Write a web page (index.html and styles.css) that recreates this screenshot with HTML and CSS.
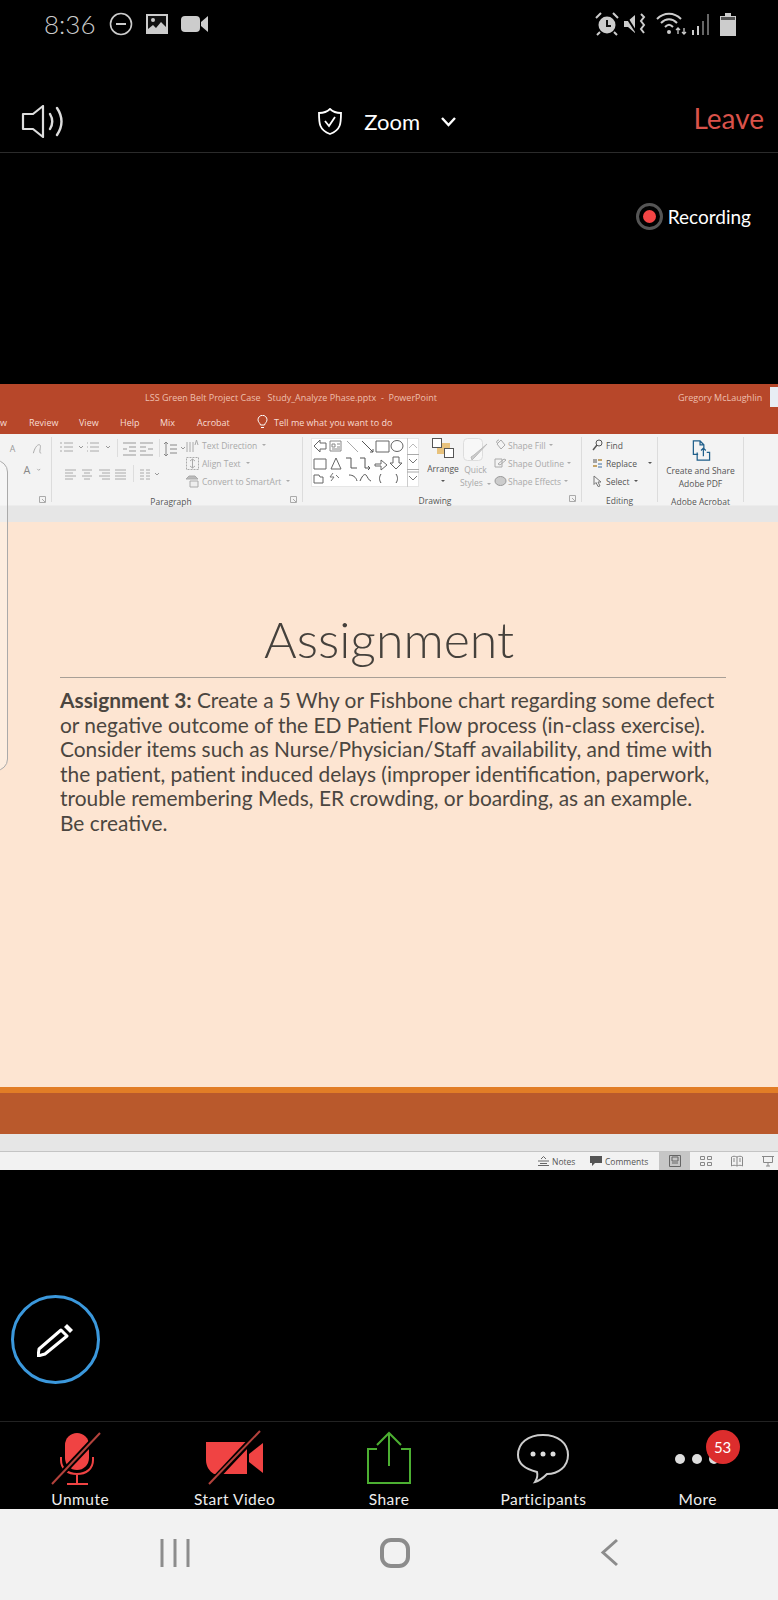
FILE: index.html
```html
<!DOCTYPE html>
<html lang="en">
<head>
    <meta charset="UTF-8">
    <meta name="viewport" content="width=device-width, initial-scale=1.0">
    <title>Zoom Meeting</title>
    <link rel="stylesheet" href="styles.css">
</head>
<body>
    <div class="status-bar">
        <div class="status-left">
            <span class="clock">8:36</span>
            <svg class="ic" width="24" height="24" viewBox="0 0 24 24"><circle cx="12" cy="12" r="10.5" fill="none" stroke="#ccc" stroke-width="1.6"/><path d="M7 12h10" stroke="#ccc" stroke-width="2"/></svg>
            <svg class="ic" width="24" height="22" viewBox="0 0 24 22"><path d="M1 1h22v20H1z" fill="#ccc"/><path d="M3 3h18v11l-5-5-5 6-3-3-5 4z" fill="#111"/><circle cx="8" cy="7" r="2" fill="#ccc"/></svg>
            <svg class="ic" width="27" height="16" viewBox="0 0 27 16"><rect x="0" y="0" width="19" height="16" rx="4" fill="#ccc"/><path d="M20 6l7-6v16l-7-6z" fill="#ccc"/></svg>
        </div>
        <div class="status-right">
            <svg width="24" height="24" viewBox="0 0 24 24"><circle cx="12" cy="13" r="8.5" fill="#ccc"/><path d="M12 8v6h4" stroke="#111" stroke-width="2" fill="none"/><path d="M1 6l5-5M23 6l-5-5M5 20l-3 3M19 20l3 3" stroke="#ccc" stroke-width="2"/></svg>
            <svg width="24" height="24" viewBox="0 0 24 24"><path d="M1 9h4l7-6v18l-7-6H1z" fill="#ccc"/><path d="M1 1l14 22" stroke="#000" stroke-width="2"/><path d="M18 2l3 3-3 4 3 4-3 4 3 4" stroke="#ccc" stroke-width="2" fill="none"/></svg>
            <svg class="wifi" width="31" height="24" viewBox="0 0 31 24"><path d="M1 7c7-7 17-7 24 0M5 11c5-5 11-5 16 0M9 15c3-3 5-3 8 0" stroke="#ccc" stroke-width="2" fill="none"/><circle cx="13" cy="20" r="2" fill="#ccc"/><path d="M22 22v-6M20 18l2-2 2 2M28 16v6M26 20l2 2 2-2" stroke="#ccc" stroke-width="1.3" fill="none"/></svg>
            <svg width="20" height="21" viewBox="0 0 20 21"><path d="M1 21v-5h2v5zM6 21v-9h2v9z" fill="#ccc"/><path d="M11 21V7h2v14zM16 21V0h2v21z" fill="#666"/></svg>
            <svg class="battery" width="16" height="23" viewBox="0 0 16 23"><path d="M5 0h6v3h5v20H0V3h5z" fill="#ccc"/><path d="M1 4h14v3H1z" fill="#555"/></svg>
        </div>
    </div>

    <div class="top-bar">
        <svg class="speaker" width="45" height="33" viewBox="0 0 45 33"><path d="M2 9h10L22 1v31l-10-8H2z" fill="none" stroke="#ddd" stroke-width="2.2" stroke-linejoin="round"/><path d="M29 9c3 5 3 10 0 15M36 3c6 9 6 18 0 27" fill="none" stroke="#ddd" stroke-width="2.4" stroke-linecap="round"/></svg>
        <div class="meeting-name">
            <svg width="24" height="27" viewBox="0 0 24 27"><path d="M12 1c3 3 6 4 11 4 0 10 0 17-11 21C1 22 1 15 1 5c5 0 8-1 11-4z" fill="none" stroke="#fff" stroke-width="1.8"/><path d="M7 13l4 5 6-9" fill="none" stroke="#fff" stroke-width="1.8"/></svg>
            <span>Zoom</span>
            <svg width="17" height="11" viewBox="0 0 17 11"><path d="M2 2l6.5 7L15 2" fill="none" stroke="#fff" stroke-width="2.4"/></svg>
        </div>
        <span class="leave">Leave</span>
    </div>

    <div class="recording">
        <div class="rec-dot"></div>
        <span>Recording</span>
    </div>

    <div class="ppt">
        <div class="ppt-title">
            <span class="doc-name">LSS Green Belt Project Case &nbsp; Study_Analyze Phase.pptx &nbsp;-&nbsp; PowerPoint</span>
            <span class="user-name">Gregory McLaughlin</span>
            <div class="avatar"></div>
        </div>
        <div class="ppt-tabs">
            <span class="tab-w">w</span>
            <span class="tab-review">Review</span>
            <span class="tab-view">View</span>
            <span class="tab-help">Help</span>
            <span class="tab-mix">Mix</span>
            <span class="tab-acrobat">Acrobat</span>
            <svg class="bulb" width="11" height="14" viewBox="0 0 11 14"><path d="M3.5 10C3 8 1 7 1 4.800a4.500 4.500 0 0 1 9 0C10 7 8 8 7.500 10zM4 12.500h3" fill="none" stroke="#fff" stroke-width="1"/></svg>
            <span>Tell me what you want to do</span>
        </div>
        <div class="ribbon">
            <div class="group group-font">
                <div class="group-body">
                    <svg width="52" height="52" viewBox="0 0 52 52" fill="none" stroke="#bbb">
                        <text x="10" y="14" font-size="9" fill="#999" stroke="none" font-family="Open Sans">A</text>
                        <path d="M34 15c2-8 6-10 7-8s-2 8 1 8" stroke="#aaa"/>
                        <text x="24" y="36" font-size="11" fill="#888" stroke="none" font-family="Open Sans">A</text>
                        <path d="M38 31l1.500 1.500L41 31" stroke="#aaa"/>
                    </svg>
                </div>
                <div class="group-foot"><svg class="launcher" width="7" height="7" viewBox="0 0 7 7"><path d="M.5.500h6v6h-6zM3 3l3 3" fill="none" stroke="#aaa"/></svg></div>
            </div>
            <div class="group group-para">
                <div class="group-body">
                    <svg class="para-icons" width="132" height="52" viewBox="0 0 132 52" fill="none" stroke="#aaa">
                        <path d="M10 5h9M10 9h9M10 13h9M6 5h2M6 9h2M6 13h2"/>
                        <path d="M25 8l2 2 2-2" stroke="#999"/>
                        <path d="M36 5h9M36 9h9M36 13h9M33 5h1M33 9h1M33 13h1"/>
                        <path d="M52 8l2 2 2-2" stroke="#999"/>
                        <path d="M63.500 1v18" stroke="#ddd"/>
                        <path d="M69 5h13M75 9h7M75 13h7M69 17h13M73 11h-4" stroke="#999"/>
                        <path d="M86 5h13M86 9h6M86 13h6M86 17h13M94 11h5" stroke="#999"/>
                        <path d="M105.500 1v18" stroke="#ddd"/>
                        <path d="M112 4v14M110 6l2-2 2 2M110 16l2 2 2-2M116 7h7M116 11h7M116 15h7" stroke="#888"/>
                        <path d="M127 9l2 2 2-2" stroke="#999"/>
                        <path d="M11 32h11M11 35h8M11 38h11M11 41h8"/>
                        <path d="M28 32h10M30 35h6M28 38h10M30 41h6"/>
                        <path d="M45 32h11M48 35h8M45 38h11M48 41h8"/>
                        <path d="M61 32h11M61 35h11M61 38h11M61 41h11"/>
                        <path d="M79.500 27v17" stroke="#ddd"/>
                        <path d="M86 32h4M86 35h4M86 38h4M86 41h4M92 32h4M92 35h4M92 38h4M92 41h4"/>
                        <path d="M101 35l2 2 2-2" stroke="#999"/>
                    </svg>
                    <div class="cmd-list">
                        <div class="cmd"><svg width="13" height="13" viewBox="0 0 13 13" fill="none" stroke="#aaa"><path d="M1 3v10M4 3v10M7 3v10M9 6l1.500-5L12 6"/></svg><span>Text Direction</span><i class="caret"></i></div>
                        <div class="cmd"><svg width="13" height="13" viewBox="0 0 13 13" fill="none" stroke="#aaa"><path d="M.500.500h12v12H.500z" stroke-dasharray="2 1"/><path d="M6.500 2v9M4 4l2.500-2L9 4M4 9l2.500 2L9 9"/></svg><span>Align Text</span><i class="caret"></i></div>
                        <div class="cmd"><svg width="13" height="13" viewBox="0 0 13 13" fill="none" stroke="#aaa"><path d="M0 4l3-3h6l3 3z" fill="#bbb"/><path d="M4 6h8v6H4z" fill="#eee"/></svg><span>Convert to SmartArt</span><i class="caret"></i></div>
                    </div>
                </div>
                <div class="group-foot"><span class="group-name">Paragraph</span><svg class="launcher" width="7" height="7" viewBox="0 0 7 7"><path d="M.5.500h6v6h-6zM3 3l3 3" fill="none" stroke="#aaa"/></svg></div>
            </div>
            <div class="group group-draw">
                <div class="group-body">
                    <svg class="shapes" width="108" height="49" viewBox="0 0 108 49" fill="none" stroke="#666">
                        <rect x=".5" y=".5" width="107" height="48" fill="#fff" stroke="#e6e6e6"/>
                        <path d="M3 8l6-6v3h6v6H9v3z"/>
                        <path d="M19 3h11v10H19zM21 6h3v3h-3zM26 6h3M26 9h3M21 11h8" stroke="#888"/>
                        <path d="M36 3l11 11" stroke="#aaa"/>
                        <path d="M51 3l11 11M59 14h3v-3" stroke="#555"/>
                        <path d="M65 3h13v11H65z"/>
                        <ellipse cx="86" cy="8" rx="6" ry="5.500"/>
                        <path d="M3 21h12v10H3z"/>
                        <path d="M20 31l5-11 5 11z"/>
                        <path d="M35 20h5v10h6" stroke="#555"/>
                        <path d="M49 20h5v10h5M57 28l2 2-2 2" stroke="#555"/>
                        <path d="M64 26h6v-4l6 5-6 5v-4h-6z"/>
                        <path d="M82 19h6v6h3l-6 6-6-6h3z"/>
                        <path d="M3 37h5l1 2h3v6H3z"/>
                        <path d="M22 35l-3 4h4l-3 4M25 37l3 3" stroke="#777"/>
                        <path d="M38 37c4 0 7 2 8 6" stroke="#555"/>
                        <path d="M49 43c3-7 5-7 6-6s3 6 5 6" stroke="#555"/>
                        <path d="M70 36c-2 3-2 6 0 9M85 36c2 3 2 6 0 9" stroke="#555"/>
                        <path d="M96.500 0v49" stroke="#ccc"/>
                        <path d="M96 16.500h12M96 31.500h12M96 34h12" stroke="#aaa"/>
                        <path d="M98 10l4-4 4 4" stroke="#bbb"/>
                        <path d="M98 21l4 4 4-4" stroke="#777"/>
                        <path d="M98 38l4 4 4-4" stroke="#777"/>
                    </svg>
                    <div class="big-cmd arrange">
                        <svg width="22" height="21" viewBox="0 0 22 21"><rect x="5" y="5" width="13" height="11" fill="#e8c27c"/><rect x=".5" y=".5" width="9" height="9" fill="#fff" stroke="#555"/><rect x="12.500" y="10.500" width="9" height="9" fill="#fff" stroke="#555"/></svg>
                        <span class="dark">Arrange</span>
                        <i class="caret dark-caret"></i>
                    </div>
                    <div class="big-cmd quick">
                        <svg width="26" height="25" viewBox="0 0 26 25"><rect x=".5" y=".5" width="19" height="22" rx="4" fill="#f7f7f7" stroke="#ddd"/><path d="M24 6L12 19l-3 3-1-3 3-2z" fill="#ccc" stroke="#bbb"/></svg>
                        <span>Quick</span>
                        <span>Styles <i class="caret"></i></span>
                    </div>
                    <div class="cmd-list shape-cmds">
                        <div class="cmd"><svg width="13" height="12" viewBox="0 0 13 12" fill="none" stroke="#aaa"><path d="M3 5l4-4 4 5-4 4zM5 1a2 2 0 0 0-2 3"/></svg><span>Shape Fill</span><i class="caret"></i></div>
                        <div class="cmd"><svg width="13" height="12" viewBox="0 0 13 12" fill="none" stroke="#aaa"><path d="M1 2h7v8H1zM4 7l6-5 2 1-6 5z"/></svg><span>Shape Outline</span><i class="caret"></i></div>
                        <div class="cmd"><svg width="13" height="12" viewBox="0 0 13 12" fill="none" stroke="#999"><ellipse cx="6.500" cy="6" rx="5.500" ry="4.500" fill="#ccc"/></svg><span>Shape Effects</span><i class="caret"></i></div>
                    </div>
                </div>
                <div class="group-foot"><span class="group-name">Drawing</span><svg class="launcher" width="7" height="7" viewBox="0 0 7 7"><path d="M.5.500h6v6h-6zM3 3l3 3" fill="none" stroke="#aaa"/></svg></div>
            </div>
            <div class="group group-edit">
                <div class="group-body">
                    <div class="cmd-list edit-cmds">
                        <div class="cmd"><svg width="11" height="12" viewBox="0 0 11 12" fill="none" stroke="#555"><circle cx="7" cy="4" r="3"/><path d="M5 6l-4 5" stroke-width="1.500"/></svg><span>Find</span></div>
                        <div class="cmd"><svg width="11" height="12" viewBox="0 0 11 12" fill="none"><path d="M1 3h4M1 5h4" stroke="#555"/><path d="M6 3h4M1 9h4" stroke="#b58a3c" stroke-width="1.500"/><path d="M6 7h4M6 10h4" stroke="#3b6ea5"/></svg><span>Replace</span><i class="caret dark-caret replace-caret"></i></div>
                        <div class="cmd"><svg width="11" height="12" viewBox="0 0 11 12" fill="none" stroke="#777"><path d="M2 1l7 6H6l2 4-2 .500-2-4-2 2z"/></svg><span>Select</span><i class="caret dark-caret"></i></div>
                    </div>
                </div>
                <div class="group-foot center"><span class="group-name">Editing</span></div>
            </div>
            <div class="group group-adobe">
                <div class="group-body">
                    <div class="big-cmd adobe">
                        <svg width="20" height="22" viewBox="0 0 20 22" fill="none" stroke="#1f5f8b" stroke-width="1.300"><path d="M7 15H2V1h7l4 4v4M9 1v4h4"/><path d="M6 13v8h13v-8h-3M12.500 17V9M10 11l2.500-2.500L15 11"/></svg>
                        <span class="dark">Create and Share</span>
                        <span class="dark">Adobe PDF</span>
                    </div>
                </div>
                <div class="group-foot center"><span class="group-name">Adobe Acrobat</span></div>
            </div>
        </div>
        <div class="ribbon-gap"></div>
        <div class="slide">
            <h1>Assignment</h1>
            <hr>
            <p>
                <b>Assignment 3:</b> Create a 5 Why or Fishbone chart regarding some defect<br>
                or negative outcome of the ED Patient Flow process (in-class exercise).<br>
                Consider items such as Nurse/Physician/Staff availability, and time with<br>
                the patient, patient induced delays (improper identification, paperwork,<br>
                trouble remembering Meds, ER crowding, or boarding, as an example.<br>
                Be creative.
            </p>
        </div>
        <div class="slide-orange"></div>
        <div class="slide-rust"></div>
        <div class="notes-gap"></div>
        <div class="ppt-status">
            <div class="status-item">
                <svg width="11" height="10" viewBox="0 0 11 10" fill="none" stroke="#666"><path d="M0 5h11M2 7.500h7M0 9.500h11M3 3l2.500-2.500L8 3"/></svg>
                <span>Notes</span>
            </div>
            <div class="status-item comments">
                <svg width="12" height="10" viewBox="0 0 12 10"><path d="M0 0h12v7H5L2 10V7H0z" fill="#555"/></svg>
                <span>Comments</span>
            </div>
            <div class="view-btn active"><svg width="12" height="12" viewBox="0 0 12 12" fill="none" stroke="#666"><path d="M.5.500h11v11H.5zM3 2h6v4H3zM3 8h6"/></svg></div>
            <div class="view-btn"><svg width="12" height="12" viewBox="0 0 12 12" fill="none" stroke="#888"><path d="M.5 1.500h4v3h-4zM7.500 1.500h4v3h-4zM.5 7.500h4v3h-4zM7.500 7.500h4v3h-4z"/></svg></div>
            <div class="view-btn"><svg width="12" height="12" viewBox="0 0 12 12" fill="none" stroke="#888"><path d="M6 2C4 1 2 1 .5 2v9C2 10 4 10 6 11c2-1 4-1 5.500 0V2C10 1 8 1 6 2zM6 2v9M2 4h2M2 6h2M8 4h2M8 6h2"/></svg></div>
            <div class="view-btn"><svg width="12" height="12" viewBox="0 0 12 12" fill="none" stroke="#888"><path d="M0 1.500h12M1.500 1.500v6h9v-6M6 7.500V11M4 11h4"/></svg></div>
        </div>
        <div class="side-panel"></div>
    </div>

    <div class="pen-area">
        <div class="pen-btn">
            <svg width="38" height="34" viewBox="0 0 38 34"><path d="M2 26L24 7l6 6-22 18-7 2z" fill="none" stroke="#fff" stroke-width="3" stroke-linejoin="round"/><path d="M27 4l3-3 6 6-3 3z" fill="#fff"/></svg>
        </div>
    </div>

    <div class="toolbar">
        <div class="tool">
            <svg width="60" height="56" viewBox="0 0 60 56">
                <rect x="15" y="3" width="24" height="37" rx="12" fill="#f04343"/>
                <path d="M11 27v3c0 9 7 14 16 14s16-5 16-14v-3M27 44v9M17 54h21" fill="none" stroke="#f04343" stroke-width="2"/>
                <path d="M52 1L2 54" stroke="#000" stroke-width="6"/>
                <path d="M50 3L2 54" stroke="#b3423c" stroke-width="2"/>
            </svg>
            <span>Unmute</span>
        </div>
        <div class="tool">
            <svg width="60" height="56" viewBox="0 0 60 56">
                <path d="M1 12h41v32H9c-5-3-8-8-8-14z" fill="#f04343"/>
                <path d="M44 24l14-11v30L44 32z" fill="#f04343"/>
                <path d="M55 1L5 54" stroke="#000" stroke-width="6"/>
                <path d="M55 1L4 54" stroke="#b3423c" stroke-width="2"/>
            </svg>
            <span>Start Video</span>
        </div>
        <div class="tool">
            <svg width="60" height="56" viewBox="0 0 60 56" fill="none" stroke="#4caf32" stroke-width="2">
                <path d="M18 19H9v34h42V19h-9"/>
                <path d="M30 3v33M18 15L30 3l12 12"/>
            </svg>
            <span>Share</span>
        </div>
        <div class="tool">
            <svg width="60" height="56" viewBox="0 0 60 56">
                <path d="M30 5c15 0 25 8 25 20s-10 19-21 19c-3 3-8 7-12 8 2-3 3-6 2-10C12 39 5 33 5 25 5 13 15 5 30 5z" fill="none" stroke="#ccc" stroke-width="2"/>
                <circle cx="20" cy="24" r="2.500" fill="#ddd"/><circle cx="30" cy="24" r="2.500" fill="#ddd"/><circle cx="40" cy="24" r="2.500" fill="#ddd"/>
            </svg>
            <span>Participants</span>
        </div>
        <div class="tool tool-more">
            <svg width="60" height="56" viewBox="0 0 60 56" fill="#ddd">
                <circle cx="12" cy="29" r="5"/><circle cx="29" cy="29" r="5"/><circle cx="46" cy="29" r="5"/>
            </svg>
            <span>More</span>
            <div class="badge">53</div>
        </div>
    </div>

    <div class="nav-bar">
        <svg width="30" height="30" viewBox="0 0 30 30" fill="none" stroke="#8c8c8c" stroke-width="3"><path d="M2 1v28M15 1v28M28 1v28"/></svg>
        <svg width="30" height="30" viewBox="0 0 30 30" fill="none" stroke="#8c8c8c" stroke-width="4"><rect x="2" y="2" width="26" height="26" rx="9"/></svg>
        <svg width="19" height="29" viewBox="0 0 19 29" fill="none" stroke="#8c8c8c" stroke-width="3"><path d="M17 2L3 14.500 17 27"/></svg>
    </div>
</body>
</html>
```

FILE: styles.css
```css
body {
    margin: 0;
    padding: 0;
    background: #000;
    font-family: Lato, "Open Sans", sans-serif;
    color: #fff;
    width: 778px;
    height: 1600px;
    overflow: hidden;
}

/* phone status bar */
.status-bar {
    height: 90px;
    box-sizing: border-box;
    padding: 12px 42px 0 44px;
    display: flex;
    justify-content: space-between;
    align-items: flex-start;
}
.status-left, .status-right {
    display: flex;
    align-items: center;
    height: 24px;
}
.status-right {
    gap: 4px;
}
.status-right .wifi {
    margin-left: 5px;
}
.status-right .battery {
    margin-left: 5px;
}
.clock {
    font-size: 26px;
    font-weight: 300;
    color: #ccc;
    width: 65px;
}
.ic {
    margin-right: 12px;
}

/* zoom top bar */
.top-bar {
    height: 62px;
    border-bottom: 1px solid #2b2b2b;
    padding: 0 14px 0 21px;
    display: flex;
    justify-content: space-between;
    align-items: flex-start;
}
.speaker {
    margin-top: 15px;
}
.meeting-name {
    display: flex;
    align-items: center;
    margin: 18px 0 0 16px;
    font-size: 22px;
}
.meeting-name span {
    margin: 0 20px 0 22px;
}
.leave {
    color: #d9524a;
    font-size: 28px;
    margin-top: 11px;
}

.recording {
    display: flex;
    justify-content: flex-end;
    align-items: center;
    gap: 5px;
    height: 34px;
    margin-top: 46px;
    padding-right: 27px;
    font-size: 19px;
}
.rec-dot {
    width: 13px;
    height: 13px;
    border-radius: 50%;
    background: #f34545;
    border: 7px solid #000;
    outline: 3px solid #555;
    outline-offset: -3px;
}

/* shared powerpoint window */
.ppt {
    margin-top: 151px;
    height: 786px;
    position: relative;
    display: flex;
    flex-direction: column;
    font-family: "Open Sans", sans-serif;
}
.ppt-title {
    height: 26px;
    background: #b7472a;
    color: #eebfae;
    font-size: 9px;
    display: flex;
    align-items: center;
    padding-left: 145px;
    flex-shrink: 0;
}
.doc-name {
    width: 533px;
}
.user-name {
    width: 92px;
}
.avatar {
    width: 8px;
    height: 20px;
    background: #e8edf4;
}
.ppt-tabs {
    height: 24px;
    background: #b7472a;
    color: #f7dcd3;
    font-size: 9px;
    display: flex;
    align-items: center;
    flex-shrink: 0;
}
.tab-w { width: 29px; }
.tab-review { width: 50px; }
.tab-view { width: 41px; }
.tab-help { width: 40px; }
.tab-mix { width: 37px; }
.tab-acrobat { width: 55px; }
.bulb { margin: 0 6px 0 5px; }

.ribbon {
    height: 71px;
    background: #f3f3f3;
    display: flex;
    flex-shrink: 0;
    font-size: 8.500px;
    color: #a9a9a9;
}
.group {
    display: flex;
    flex-direction: column;
    border-right: 1px solid #dcdcdc;
    margin: 3px 0;
    box-sizing: border-box;
    padding-top: 1px;
}
.group-font { width: 52px; }
.group-para { width: 251px; }
.group-draw { width: 279px; }
.group-edit { width: 76px; }
.group-adobe { width: 86px; }
.group-body {
    height: 52px;
    display: flex;
}
.group-foot {
    flex: 1;
    display: flex;
    align-items: center;
    justify-content: center;
    position: relative;
    color: #555;
    padding-top: 6px;
}
.group-para .group-foot { padding-right: 12px; }
.group-draw .group-foot { padding-right: 14px; }
.launcher {
    position: absolute;
    right: 5px;
    top: 6px;
}
.group-name {
    font-size: 8.500px;
}
.group-para .group-body {
    padding-left: 2px;
}
.cmd-list {
    display: flex;
    flex-direction: column;
    justify-content: space-between;
    margin-top: -1px;
    height: 52px;
}
.cmd {
    display: flex;
    align-items: center;
    gap: 3px;
    height: 16px;
    white-space: nowrap;
}
.caret {
    display: inline-block;
    width: 0;
    height: 0;
    border: 2px solid transparent;
    border-top: 2px solid #aaa;
    border-bottom: 0;
    margin-left: 2px;
    vertical-align: middle;
}
.dark-caret {
    border-top-color: #555;
}
.dark {
    color: #555;
}
.shapes {
    margin: 0 0 0 8px;
}
.big-cmd {
    display: flex;
    flex-direction: column;
    align-items: center;
    line-height: 13px;
    white-space: nowrap;
}
.arrange {
    width: 40px;
    margin-left: 4px;
}
.arrange svg {
    margin-bottom: 3px;
}
.arrange .caret {
    margin: 5px 0 0;
}
.quick {
    width: 35px;
    margin-left: -5px;
}
.shape-cmds {
    margin-left: 1px;
}
.shape-cmds .cmd {
    gap: 1px;
}
.edit-cmds {
    padding-left: 10px;
    color: #555;
}
.replace-caret {
    margin-left: 8px;
}
.adobe {
    width: 100%;
}
.adobe svg {
    margin: 2px 0 3px;
}
.ribbon-gap {
    height: 17px;
    background: #e6e6e6;
    border-top: 1px solid #ececec;
    box-sizing: border-box;
    flex-shrink: 0;
}

/* slide */
.slide {
    height: 565px;
    flex-shrink: 0;
    background: #fde5d2;
    box-sizing: border-box;
    padding: 86px 52px 0 60px;
    color: #4b4640;
}
.slide h1 {
    margin: 0;
    padding-right: 8px;
    font-size: 50px;
    font-weight: 300;
    text-align: center;
    line-height: 62px;
    color: #45413c;
    font-family: Lato, sans-serif;
}
.slide hr {
    border: 0;
    border-top: 1px solid #a89f96;
    margin: 7px 0 0;
}
.slide p {
    margin: 10px 0 0;
    font-family: Lato, sans-serif;
    font-size: 20.900px;
    line-height: 24.500px;
    white-space: nowrap;
}
.slide-orange {
    height: 6px;
    background: #e27d26;
    flex-shrink: 0;
}
.slide-rust {
    height: 41px;
    background: #b9592c;
    flex-shrink: 0;
}
.notes-gap {
    height: 17px;
    background: #e6e6e6;
    border-bottom: 1px solid #c4c4c4;
    flex-shrink: 0;
}
.ppt-status {
    flex: 1;
    background: #f2f2f2;
    display: flex;
    justify-content: flex-end;
    align-items: stretch;
    font-size: 8.500px;
    color: #555;
    margin-right: -5px;
}
.status-item {
    display: flex;
    align-items: center;
    gap: 3px;
    width: 52px;
}
.status-item.comments {
    width: 69px;
}
.view-btn {
    width: 31px;
    display: flex;
    align-items: center;
    justify-content: center;
}
.view-btn.active {
    background: #c6c6c6;
}
.side-panel {
    position: absolute;
    left: -12px;
    top: 76px;
    width: 18px;
    height: 309px;
    border: 1px solid #aaa;
    border-radius: 0 12px 12px 0;
    background: rgba(255, 255, 255, .3);
}

/* bottom */
.pen-area {
    height: 251px;
    box-sizing: border-box;
    padding: 125px 0 0 11px;
}
.pen-btn {
    width: 83px;
    height: 83px;
    border: 3px solid #3b98dc;
    border-radius: 50%;
    display: flex;
    align-items: center;
    justify-content: center;
}
.toolbar {
    height: 88px;
    border-top: 1px solid #222;
    padding: 8px 3px 0;
    box-sizing: border-box;
    display: flex;
}
.tool {
    flex: 1;
    display: flex;
    flex-direction: column;
    align-items: center;
    font-size: 15.500px;
    letter-spacing: .5px;
    color: #eee;
    position: relative;
}
.tool span {
    margin-top: 3px;
    line-height: 20px;
}
.badge {
    position: absolute;
    top: 0;
    left: 85px;
    width: 34px;
    height: 34px;
    border-radius: 50%;
    background: #dc2d2d;
    color: #fff;
    font-size: 15px;
    letter-spacing: 0;
    display: flex;
    align-items: center;
    justify-content: center;
}
.nav-bar {
    height: 91px;
    background: #f2f2f2;
    display: flex;
    align-items: center;
    justify-content: center;
    gap: 190px;
    padding-bottom: 4px;
    box-sizing: border-box;
}
```
